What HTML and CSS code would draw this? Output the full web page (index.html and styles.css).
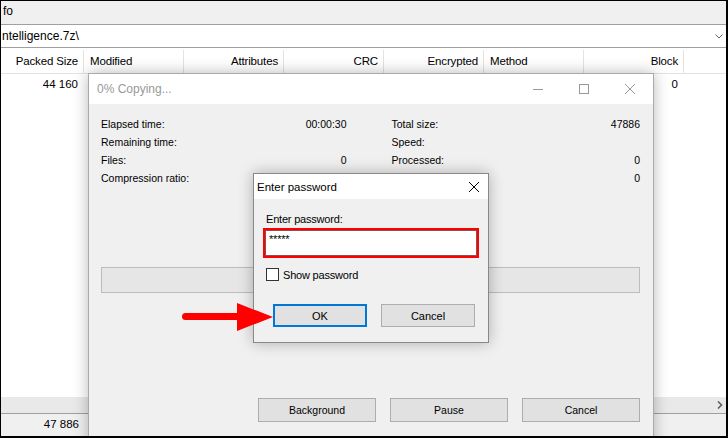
FILE: index.html
```html
<!DOCTYPE html>
<html lang="en">
<head>
  <meta charset="UTF-8">
  <title>7-Zip - Enter password</title>
  <link rel="stylesheet" href="styles.css">
</head>
<body>
  <div class="screen">
    <div class="menubar"><span>fo</span></div>
    <div class="address">
      <span>ntelligence.7z\</span>
      <svg class="chevron" width="8" height="5" viewBox="0 0 8 5"><path d="M0.5 0.5 L4 4 L7.5 0.5" fill="none" stroke="#666" stroke-width="1"/></svg>
    </div>
    <div class="listview">
      <div class="row header">
        <div class="col first right">Packed Size</div>
        <div class="col">Modified</div>
        <div class="col right">Attributes</div>
        <div class="col right">CRC</div>
        <div class="col right">Encrypted</div>
        <div class="col">Method</div>
        <div class="col right">Block</div>
      </div>
      <div class="row item">
        <div class="col first right">44 160</div>
        <div class="col"></div>
        <div class="col right"></div>
        <div class="col right"></div>
        <div class="col right"></div>
        <div class="col"></div>
        <div class="col right">0</div>
      </div>
    </div>
    <div class="hscroll">
      <svg width="6" height="8" viewBox="0 0 6 8"><path d="M1 0.5 L4.5 4 L1 7.5" fill="none" stroke="#606060" stroke-width="1.6"/></svg>
    </div>
    <div class="statusbar"><div class="cell">47 886</div></div>

    <!-- progress window -->
    <div class="window copying">
      <div class="titlebar">
        <span class="title">0% Copying...</span>
        <div class="controls">
          <span class="ctl"><svg width="10" height="10" viewBox="0 0 10 10"><path d="M0 5.5 H10" stroke="#999" stroke-width="1"/></svg></span>
          <span class="ctl"><svg width="10" height="10" viewBox="0 0 10 10"><rect x="0.5" y="0.5" width="9" height="9" fill="none" stroke="#999" stroke-width="1"/></svg></span>
          <span class="ctl"><svg width="10" height="10" viewBox="0 0 10 10"><path d="M0 0 L10 10 M10 0 L0 10" stroke="#999" stroke-width="1"/></svg></span>
        </div>
      </div>
      <div class="body">
        <div class="info">
          <div class="stats">
            <div class="stat"><span>Elapsed time:</span><span>00:00:30</span></div>
            <div class="stat"><span>Remaining time:</span><span></span></div>
            <div class="stat"><span>Files:</span><span>0</span></div>
            <div class="stat"><span>Compression ratio:</span><span></span></div>
          </div>
          <div class="stats">
            <div class="stat"><span>Total size:</span><span>47886</span></div>
            <div class="stat"><span>Speed:</span><span></span></div>
            <div class="stat"><span>Processed:</span><span>0</span></div>
            <div class="stat"><span>Compressed size:</span><span>0</span></div>
          </div>
        </div>
        <div class="progress"></div>
        <div class="buttons">
          <button class="btn wide">Background</button>
          <button class="btn wide">Pause</button>
          <button class="btn wide">Cancel</button>
        </div>
      </div>
    </div>

    <!-- password dialog -->
    <div class="window password">
      <div class="titlebar small">
        <span class="title dark">Enter password</span>
        <span class="close"><svg width="10" height="10" viewBox="0 0 10 10"><path d="M0 0 L10 10 M10 0 L0 10" stroke="#000" stroke-width="1"/></svg></span>
      </div>
      <div class="body pw">
        <div class="label">Enter password:</div>
        <div class="pwfield"><div class="textbox">*****</div></div>
        <label class="check"><span class="box"></span>Show password</label>
        <div class="buttons">
          <button class="btn default">OK</button>
          <button class="btn">Cancel</button>
        </div>
      </div>
    </div>

    <svg class="arrow" width="94" height="31" viewBox="181 302 94 31">
      <rect x="182" y="313" width="58" height="7" rx="3.5" fill="#ff0000"/>
      <polygon points="237,303 273,317 237,331" fill="#ff0000"/>
    </svg>
  </div>
</body>
</html>
```

FILE: styles.css
```css
*{
  box-sizing: border-box;
}
body{
  margin: 0;
  width: 728px;
  height: 438px;
  overflow: hidden;
  font-family: "Liberation Sans", Arial, sans-serif;
  font-size: 11.5px;
  color: #000;
  background: #fff;
}
.screen{
  position: relative;
  width: 728px;
  height: 438px;
  border-style: solid;
  border-color: #000;
  border-width: 1px 2px 2px 1px;
  overflow: hidden;
  display: flex;
  flex-direction: column;
  background: #fff;
}

/* file manager behind */
.menubar{
  height: 24px;
  flex: none;
  background: #f0f0f0;
  border-bottom: 1px solid #a0a0a0;
  padding: 3px 0 0 2px;
  font-size: 12px;
  line-height: 14px;
}
.address{
  height: 23px;
  flex: none;
  border-bottom: 1px solid #a0a0a0;
  display: flex;
  align-items: center;
  justify-content: space-between;
  padding: 0 3px 0 1px;
  font-size: 12px;
}
.listview{
  flex: 1;
}
.row{
  display: flex;
}
.header{
  height: 26px;
  padding-top: 2px;
  border-bottom: 1px solid #e3e3e3;
}
.col{
  width: 100px;
  flex: none;
  padding: 0 6px;
  white-space: nowrap;
}
.col.first{
  width: 83px;
  padding-right: 5px;
}
.col.right{
  text-align: right;
  padding-right: 5px;
}
.header .col{
  border-right: 1px solid #e3e3e3;
  line-height: 23px;
  letter-spacing: -0.15px;
}
.item{
  height: 20px;
  line-height: 20px;
}
.item .col{
  border-right: 1px solid transparent;
}
.hscroll{
  height: 16px;
  flex: none;
  background: #e9e9e9;
  display: flex;
  align-items: center;
  justify-content: flex-end;
  padding-right: 3px;
}
.statusbar{
  height: 23px;
  flex: none;
  background: #f0f0f0;
  border-top: 1px solid #a0a0a0;
  display: flex;
}
.statusbar .cell{
  width: 83px;
  text-align: right;
  padding-right: 5px;
  line-height: 21px;
  font-size: 11.5px;
}

/* windows */
.window{
  position: absolute;
  background: #f0f0f0;
  box-shadow: 0 0 14px rgba(0, 0, 0, 0.28);
}
.copying{
  left: 87px;
  top: 72px;
  width: 566px;
  height: 380px;
  border: 1px solid #aaaaaa;
}
.password{
  left: 252px;
  top: 172px;
  width: 236px;
  height: 170px;
  border: 1px solid #888;
}
.titlebar{
  height: 30px;
  background: #fff;
  display: flex;
  align-items: center;
  justify-content: space-between;
}
.titlebar.small{
  height: 25px;
}
.title{
  padding-left: 8px;
  font-size: 12px;
  color: #999;
}
.title.dark{
  padding-left: 3px;
  font-size: 11.5px;
  color: #000;
}
.controls{
  display: flex;
  height: 30px;
}
.ctl{
  width: 46px;
  display: flex;
  align-items: center;
  justify-content: center;
}
.close{
  width: 28px;
  display: flex;
  justify-content: center;
  padding-top: 1px;
}

.body{
  padding: 11px 13px 0 12px;
  font-size: 10.5px;
}
.info{
  display: flex;
  gap: 45px;
}
.stats{
  width: 246px;
}
.stats + .stats{
  width: 249px;
}
.stat{
  height: 18px;
  line-height: 18px;
  display: flex;
  justify-content: space-between;
}
.progress{
  margin-top: 80px;
  height: 26px;
  background: #e6e6e6;
  border: 1px solid #bcbcbc;
}
.buttons{
  display: flex;
  justify-content: flex-end;
  gap: 14px;
}
.copying .buttons{
  margin-top: 105px;
}
.btn{
  width: 94px;
  height: 23px;
  padding: 0;
  font-family: inherit;
  font-size: 11px;
  color: #000;
  background: #e1e1e1;
  border: 1px solid #adadad;
}
.btn.wide{
  width: 118px;
  height: 24px;
  font-size: 10.5px;
}
.btn.default{
  border: 2px solid #0078d7;
}

/* password dialog body */
.body.pw{
  padding: 13px 13px 0 12px;
  font-size: 11px;
  letter-spacing: -0.2px;
}
.label{
  line-height: 14px;
}
.pwfield{
  margin: 2px 0 0 -3px;
  width: 216px;
  height: 30px;
  border: 2px solid #ff0000;
}
.textbox{
  height: 100%;
  background: #fff;
  border: 1px solid #8a5050;
  padding: 1px 3px;
  font-size: 11px;
  line-height: 14px;
}
.check{
  display: flex;
  align-items: center;
  gap: 4px;
  margin-top: 10px;
  height: 13px;
}
.box{
  width: 13px;
  height: 13px;
  background: #fff;
  border: 1px solid #333;
}
.pw .buttons{
  margin-top: 23px;
}

.arrow{
  position: absolute;
  left: 180px;
  top: 301px;
}
```
